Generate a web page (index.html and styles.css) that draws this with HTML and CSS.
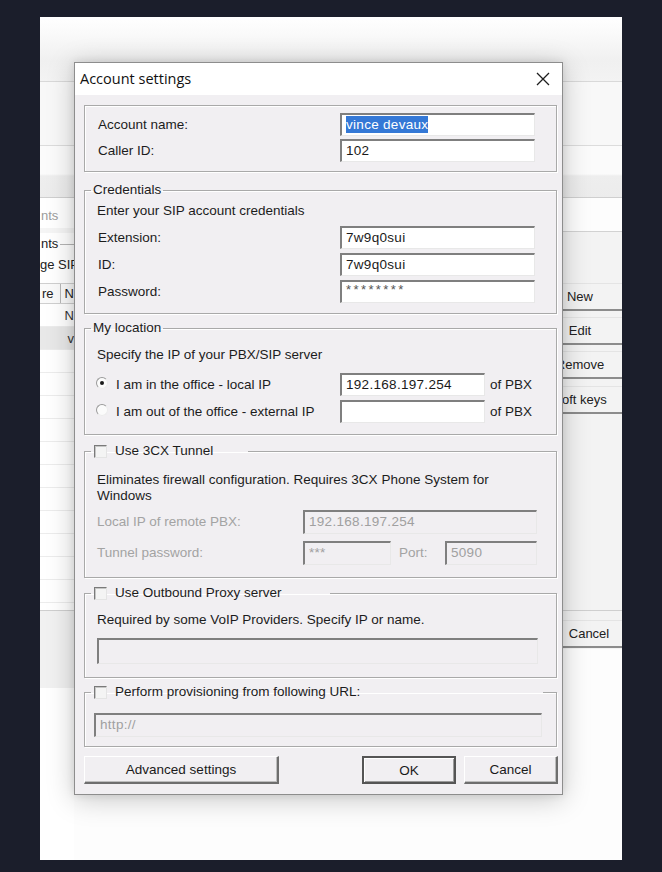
FILE: index.html
```html
<!DOCTYPE html>
<html>
<head>
<meta charset="utf-8">
<title>Account settings</title>
<link rel="stylesheet" href="styles.css">
</head>
<body>
<div class="screen">
  <div class="app">
    <div class="app-top"></div>
    <div class="app-band"></div>
    <div class="app-main">
      <div class="app-left">
        <div class="strip"></div>
        <div class="tabline">nts</div>
        <div class="grouptitle"><span class="gt-text">nts</span><span class="gline"></span></div>
        <div class="groupdesc">ge SIP</div>
        <div class="list-head"><span class="hcell">re</span><span class="hcell2">N</span></div>
        <div class="list-row"><span class="rcell"></span><span class="rcell2">N</span></div>
        <div class="list-row sel"><span class="rcell"></span><span class="rcell2">v</span></div>
        <div class="list-row"></div>
        <div class="list-row"></div>
        <div class="list-row"></div>
        <div class="list-row"></div>
        <div class="list-row"></div>
        <div class="list-row"></div>
        <div class="list-row"></div>
        <div class="list-row"></div>
        <div class="list-row"></div>
        <div class="list-row"></div>
        <div class="list-row"></div>
        <div class="app-foot"></div>
      </div>
      <div class="app-right">
        <div class="strip"></div>
        <div class="rbox"></div>
        <div class="rpanel">
          <div class="rbtns">
            <div class="rbtn">New</div>
            <div class="rbtn">Edit</div>
            <div class="rbtn">Remove</div>
            <div class="rbtn">Soft keys</div>
          </div>
          <div class="rfoot">
            <div class="rbtn rcancel">Cancel</div>
          </div>
        </div>
      </div>
    </div>
  </div>

  <div class="dialog">
    <div class="titlebar">
      <span class="title">Account settings</span>
      <svg class="close" width="16" height="16" viewBox="0 0 16 16"><path d="M2 2 L14 14 M14 2 L2 14" stroke="#1e1e1e" stroke-width="1.3" fill="none"/></svg>
    </div>
    <div class="body">
      <div class="group g-account">
        <div class="form2">
          <label class="lbl">Account name:</label>
          <div class="input"><span class="selected">vince devaux</span></div>
          <label class="lbl">Caller ID:</label>
          <div class="input">102</div>
        </div>
      </div>

      <fieldset class="group g-cred">
        <legend>Credentials</legend>
        <div class="form2 cred">
          <div class="span2 txt">Enter your SIP account credentials</div>
          <label class="lbl">Extension:</label>
          <div class="input">7w9q0sui</div>
          <label class="lbl">ID:</label>
          <div class="input">7w9q0sui</div>
          <label class="lbl">Password:</label>
          <div class="input pwd">********</div>
        </div>
      </fieldset>

      <fieldset class="group g-loc">
        <legend>My location</legend>
        <div class="loc">
          <div class="span3 txt">Specify the IP of your PBX/SIP server</div>
          <label class="radio-l"><span class="radio on"></span>I am in the office - local IP</label>
          <div class="input">192.168.197.254</div>
          <span class="ofpbx">of PBX</span>
          <label class="radio-l"><span class="radio"></span>I am out of the office - external IP</label>
          <div class="input"></div>
          <span class="ofpbx">of PBX</span>
        </div>
      </fieldset>

      <fieldset class="group g-tunnel">
        <legend class="chk-legend lw-tunnel"><span class="check"></span>Use 3CX Tunnel</legend>
        <div class="tunnel">
          <div class="span4 txt wrap">Eliminates firewall configuration. Requires 3CX Phone System for Windows</div>
          <label class="lbl dis">Local IP of remote PBX:</label>
          <div class="input disabled span3i">192.168.197.254</div>
          <label class="lbl dis">Tunnel password:</label>
          <div class="input disabled">***</div>
          <label class="lbl dis port">Port:</label>
          <div class="input disabled">5090</div>
        </div>
      </fieldset>

      <fieldset class="group g-proxy">
        <legend class="chk-legend lw-proxy"><span class="check"></span>Use Outbound Proxy server</legend>
        <div class="proxy">
          <div class="txt">Required by some VoIP Providers. Specify IP or name.</div>
          <div class="input disabled proxy-in"></div>
        </div>
      </fieldset>

      <fieldset class="group g-prov">
        <legend class="chk-legend lw-prov"><span class="check"></span>Perform provisioning from following URL:</legend>
        <div class="prov">
          <div class="input disabled prov-in">http://</div>
        </div>
      </fieldset>

      <div class="buttons">
        <button class="btn adv">Advanced settings</button>
        <button class="btn ok">OK</button>
        <button class="btn cancel">Cancel</button>
      </div>
    </div>
  </div>
</div>
</body>
</html>
```

FILE: styles.css
```css
* { box-sizing: border-box; }
html, body { margin: 0; padding: 0; }
body {
  background: #1b1e2b;
  width: 662px;
  height: 872px;
  overflow: hidden;
  font-family: "Liberation Sans", Arial, sans-serif;
  font-size: 13.5px;
  color: #1c1c1c;
}
.screen { position: relative; width: 662px; height: 872px; padding-top: 17px; }

/* ---------- background application window ---------- */
.app {
  margin-left: 40px;
  width: 582px;
  height: 843px;
  background: #fdfdfd;
  display: flex;
  flex-direction: column;
  overflow: hidden;
}
.app-top {
  height: 65px;
  background: linear-gradient(#ffffff 0, #fcfcfc 10px, #f0f0f0 44px, #f3f3f3 64px);
  border-bottom: 1px solid #d9d9d9;
}
.app-band {
  height: 64px;
  background: #f8f8f8;
  border-bottom: 1px solid #dcdcdc;
}
.app-main { display: flex; justify-content: space-between; flex: 1; }
.app-left { width: 34px; display: flex; flex-direction: column; background: #fff; }
.app-right { width: 59px; display: flex; flex-direction: column; background: #fdfdfd; }
.strip {
  height: 52px;
  background: linear-gradient(#fbfbfb 0, #fbfbfb 28px, #eeeeee 30px, #ececec 51px);
  border-bottom: 1px solid #cfcfcf;
}
.tabline {
  height: 35px;
  display: flex; align-items: center;
  color: #9c9c9c; font-size: 13px;
  border-bottom: 5px solid #f5f5f5;
  padding-top: 4px;
  padding-left: 1px;
  white-space: nowrap;
}
.grouptitle {
  height: 21px; display: flex; align-items: center;
  font-size: 13px; color: #222; white-space: nowrap;
}
.gt-text { padding-left: 1px; }
.gline { flex: 1; height: 1px; background: #b5b5b5; margin-left: 2px; margin-top: 2px; }
.groupdesc { height: 21px; display: flex; align-items: center; font-size: 13px; color: #222; white-space: nowrap; }
.list-head {
  height: 21px; margin-top: 8px; display: flex; align-items: center;
  border-top: 1px solid #cfcfcf; border-bottom: 1px solid #cfcfcf;
  font-size: 13px; color: #222;
  background: #fafafa;
  white-space: nowrap;
}
.hcell { width: 21px; height: 100%; display: flex; align-items: center; border-right: 1px solid #b8b8b8; padding-left: 2px; }
.hcell2 { padding-left: 4px; }
.list-row {
  height: 23px; display: flex; align-items: center; border-bottom: 1px solid #ececec;
  font-size: 13px; color: #333;
}
.list-row.sel { background: #e8e8e8; }
.rcell { width: 28px; }
.app-foot { height: 78px; margin-top: 7px; background: #f1f1f1; border-top: 1px solid #cfcfcf; }

.rbox { height: 34px; background: #fdfdfd; border-bottom: 1px solid #d2d2d2; }
.rpanel { background: #f3f3f3; padding-bottom: 1px; }
.rbtns { display: flex; flex-direction: column; gap: 6px; padding-top: 51px; margin-left: -26px; }
.rbtn {
  height: 28px; display: flex; align-items: center; justify-content: center;
  font-size: 13px; color: #222;
  background: #f3f3f3;
  border-top: 1px solid #e4e4e4;
  border-bottom: 2px solid #8c8c8c;
  width: 86px;
}
.rbtns .rbtn:last-child { margin-top: 1px; }
.rfoot { margin-top: 196px; border-top: 1px solid #cfcfcf; padding-top: 9px; margin-left: -26px; }
.rcancel { width: 100px; padding-left: 4px; }

/* ---------- dialog ---------- */
.dialog {
  position: absolute;
  left: 74px;
  top: 62px;
  width: 489px;
  height: 733px;
  background: #f1eff2;
  border: 1px solid #8d8d8d;
  box-shadow: 0 4px 26px rgba(0, 0, 0, 0.22), 0 0 8px rgba(0, 0, 0, 0.10);
  display: flex;
  flex-direction: column;
}
.titlebar {
  height: 32px;
  background: #ffffff;
  display: flex;
  align-items: center;
  justify-content: space-between;
  padding: 0 11px 0 5px;
}
.title { font-family: "Open Sans", "Noto Sans", sans-serif; font-size: 14.5px; color: #111; margin-top: -2px; }
.close { display: block; }

.body { padding: 10px 5px 10px 9px; display: flex; flex-direction: column; }

.group {
  margin: 0;
  padding: 0;
  border: 1px solid #a9a9a9;
  box-shadow: inset 1px 1px 0 #ffffff, 1px 1px 0 #ffffff;
  min-width: 0;
}
legend {
  padding: 0 2px;
  margin-left: 6px;
  line-height: 16px;
  height: 16px;
  color: #1c1c1c;
}
.chk-legend { display: flex; align-items: center; padding: 0 0 0 3px; white-space: nowrap; }
.lw-tunnel { width: 157px; }
.lw-proxy { width: 239px; }
.lw-prov { width: 452px; }
.check {
  display: inline-block; width: 13px; height: 13px; margin-right: 8px;
  border: 1px solid; border-color: #7a7a7a #e4e4e4 #e4e4e4 #7a7a7a;
  background: #f4f4f4;
  box-shadow: inset 1px 1px 0 #c6c6c6;
}

.txt { line-height: 16px; height: 16px; }
.txt.wrap { height: auto; max-width: 420px; }

.input {
  height: 23px;
  background: #ffffff;
  border-style: solid;
  border-width: 2px 1px 1px 2px;
  border-color: #7f7f7f #e8e8e8 #e8e8e8 #7f7f7f;
  padding: 0 4px;
  font-size: 13.5px;
  line-height: 19px;
  color: #1a1a1a;
  white-space: nowrap;
  overflow: hidden;
  letter-spacing: 0.3px;
}
.input.pwd { font-size: 13px; letter-spacing: 2.4px; line-height: 16px; color: #555; }
.input.disabled { background: #f1eff2; color: #a0a0a0; }
.selected { background: #3478d6; color: #fff; padding: 1px 0; }

.lbl { line-height: 16px; color: #1c1c1c; }
.lbl.dis { color: #a3a3a3; }

.form2 { display: grid; grid-template-columns: 1fr 195px; column-gap: 0; align-items: center; }
.g-account { padding: 7px 21px 9px 13px; }
.g-account .form2 { row-gap: 3px; }

.g-cred { margin-top: 10px; }
.cred { padding: 5px 21px 10px 12px; row-gap: 4px; }
.cred .span2 { grid-column: 1 / 3; margin-bottom: 3px; }
.cred .lbl { padding-left: 1px; }

.g-loc { margin-top: 6px; }
.loc {
  padding: 11px 11px 11px 11px;
  display: grid;
  grid-template-columns: 244px 145px auto;
  row-gap: 4px;
  align-items: center;
}
.loc .span3 { grid-column: 1 / 4; margin-bottom: 6px; padding-left: 1px; }
.radio-l { display: flex; align-items: center; }
.radio {
  width: 12px; height: 12px; border-radius: 50%;
  border: 1px solid; border-color: #9a9a9a #ededed #ededed #9a9a9a;
  background: #fbfbfb; margin-right: 8px; position: relative;
  margin-top: -3px;
}
.radio.on::after {
  content: ""; position: absolute; left: 3px; top: 3px; width: 4px; height: 4px; border-radius: 50%; background: #1a1a1a;
}
.ofpbx { padding-left: 5px; }

.g-tunnel { margin-top: 8px; }
.tunnel {
  padding: 13px 19px 12px 12px;
  display: grid;
  grid-template-columns: 206px 88px 54px 92px;
  row-gap: 7px;
  align-items: center;
}
.tunnel .span4 { grid-column: 1 / 5; margin-bottom: -1px; }
.tunnel .input { height: 24px; line-height: 20px; }
.span3i { grid-column: 2 / 5; }
.port { padding-left: 8px; }

.g-proxy { margin-top: 7px; }
.proxy { padding: 11px 18px 13px 12px; display: flex; flex-direction: column; gap: 10px; }
.proxy-in { height: 26px; width: 441px; }

.g-prov { margin-top: 6px; }
.prov { padding: 13px 14px 9px 9px; }
.prov-in { height: 24px; width: 448px; line-height: 20px; }

.buttons { display: flex; margin-top: 9px; }
.btn {
  height: 28px;
  font-family: "Liberation Sans", Arial, sans-serif;
  font-size: 13.5px;
  color: #1a1a1a;
  background: #f1eff2;
  border-style: solid;
  border-width: 1px 2px 2px 1px;
  border-color: #ffffff #6e6e6e #6e6e6e #ffffff;
  box-shadow: inset -1px -1px 0 #bdbdbd;
  padding: 0;
}
.adv { width: 195px; }
.ok { width: 94px; margin-left: auto; border: 2px solid #555; box-shadow: inset 1px 1px 0 #fff, inset -1px -1px 0 #9a9a9a; }
.cancel { width: 94px; margin-left: 8px; margin-right: -1px; }
```
